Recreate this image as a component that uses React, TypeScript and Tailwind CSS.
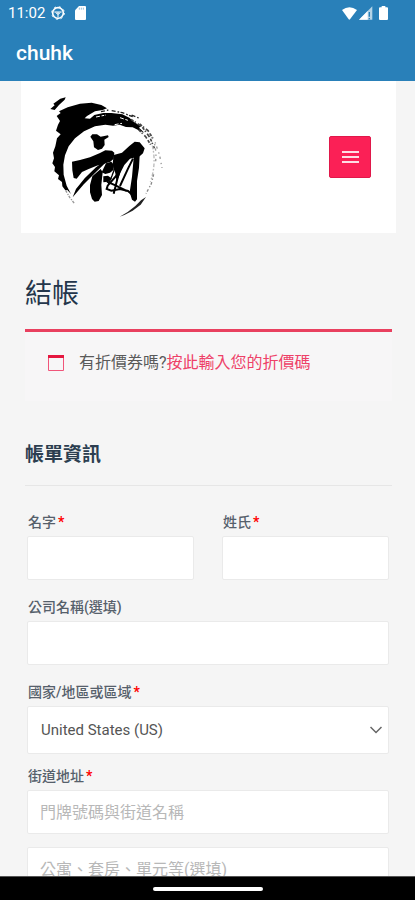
import { useState } from 'react';
import type { InputHTMLAttributes } from 'react';

interface FieldLabelProps {
  htmlFor: string;
  text: string;
  required?: boolean;
}

function FieldLabel({ htmlFor, text, required }: FieldLabelProps) {
  return (
    <label htmlFor={htmlFor} className="block h-7 text-sm leading-7 font-medium text-[#56606b] pl-px">
      {text}
      {required && <span className="ml-0.5 font-bold text-[#ff0000]">*</span>}
    </label>
  );
}

function TextInput(props: InputHTMLAttributes<HTMLInputElement>) {
  return (
    <input
      type="text"
      className="block w-full h-11 px-3 bg-white border border-[#eaeaea] rounded-xs text-base text-[#666666] placeholder:text-[#b8b8b8] focus:outline-none focus:border-[#fb2056]"
      {...props}
    />
  );
}

function StatusBar() {
  return (
    <div className="flex items-center justify-between h-[26px] pl-2 pr-[27px] text-white">
      <div className="flex items-center">
        <span className="text-[15px] leading-[26px]">11:02</span>
        <svg className="w-[14px] h-[14px] ml-1.5" viewBox="0 0 42 42" fill="none" stroke="currentColor">
          <circle cx="21" cy="21" r="16" strokeWidth="5" />
          <circle cx="21" cy="21" r="19" strokeWidth="3" strokeDasharray="6 9" />
          <path d="M10 18h22M21 18v16M14 20l7 5 7-5" strokeWidth="3" />
        </svg>
        <svg className="w-[11px] h-[14px] ml-2.5" viewBox="0 0 33 42" fill="currentColor">
          <path d="M12 0h18a3 3 0 0 1 3 3v36a3 3 0 0 1-3 3H3a3 3 0 0 1-3-3V13z" />
          <path d="M13 5v6M19 5v6M25 5v6" stroke="#2980b9" strokeOpacity="0.6" strokeWidth="2.5" />
        </svg>
      </div>
      <div className="flex items-center">
        <svg className="w-[15px] h-[13px]" viewBox="0 0 45 39" fill="currentColor">
          <path d="M0 9Q22-8 45 9L24 37q-2 2-4 0z" />
        </svg>
        <svg className="w-[14px] h-[14px] ml-0.5" viewBox="0 0 42 42">
          <path d="M0 41 40 1v40z" fill="currentColor" fillOpacity="0.65" />
          <path d="M0 41 26 15v26z" fill="currentColor" />
          <path d="M31 18v14M31 36v4" stroke="#2980b9" strokeWidth="4" />
        </svg>
        <svg className="w-[9px] h-[14px] ml-1.5" viewBox="0 0 27 42" fill="currentColor">
          <path d="M8 0h11v4h5a3 3 0 0 1 3 3v32a3 3 0 0 1-3 3H3a3 3 0 0 1-3-3V7a3 3 0 0 1 3-3h5z" />
        </svg>
      </div>
    </div>
  );
}

// Ink brush ring with the calligraphic mark inside
function Logo() {
  return (
    <svg className="w-[140px] h-[145px]" viewBox="0 0 420 435" role="img" aria-label="chuhk">
      {/* ring, thick upper left part */}
      <path d="M31 72 44 61 40 56 61 41 77 37 74 44 57 60 44 75z" />
      <path d="M50 93 62 84 57 79 83 67 120 56 155 53 184 60 201 70 188 75 165 79 141 93 134 100 150 101 163 90 190 84 214 84 247 88 268 98 283 112 303 124 297 128 313 143 296 136 278 127 258 126 239 119 219 122 196 119 165 124 132 139 105 160 86 184 75 211 70 239 71 269 80 302 93 327 82 315 76 316 67 304 66 291 54 282 57 271 43 259 45 246 37 235 42 220 39 203 46 184 51 160 62 148 48 137 54 119 60 108z" />
      {/* dry brush streaks */}
      <path d="M168 96l30-6M224 119l22-4M240 98l24 8" stroke="#fff" strokeWidth="3" strokeDasharray="12 5 8 4" />
      <path d="M183 80l22-5M215 77l32 6 36 14M275 90l21 9" stroke="#222" strokeWidth="4" strokeDasharray="12 6 5 4" fill="none" />
      <path d="M273 103 306 125 330 158 343 190 M299 117 324 137 340 162 M296 134 317 155 332 179" fill="none" stroke="#444" strokeWidth="5" strokeDasharray="9 4 4 7 12 6" />
      <path d="M328 145 346 174 359 211 366 249 M344 177 348 202 347 231" fill="none" stroke="#999" strokeWidth="4" strokeDasharray="4 9 7 12" />
      <path d="M337 182Q350 237 331 291" fill="none" stroke="#bbb" strokeWidth="4" strokeDasharray="11 5 5 6" />
      <path d="M341 268 334 296 318 326" fill="none" stroke="#888" strokeWidth="4" strokeDasharray="8 5 4 7" />
      <path d="M318 336 302 359 278 377 253 390 239 395 263 381 286 363 303 346z" fill="#222" />
      <path d="M77 316 89 337 103 355" fill="none" stroke="#999" strokeWidth="4" strokeDasharray="8 4 4 3" />
      {/* mark */}
      <path d="M151 155 157 148 171 148 182 155 204 151 206 156 193 164 194 180 186 191 174 195 162 187 160 169z" />
      <path d="M96 230 120 225 150 217 180 204 196 196 216 197 223 203 221 221 211 230 190 237 170 242 146 252 126 261 110 281 101 279 97 256z" />
      <path d="M206 220 198 232 165 264 132 297 98 337 108 312 134 280 168 247z" />
      <path d="M157 274 182 252 188 262 184 300 186 330 176 348 164 350 156 342 150 322 150 300z" />
      <path d="M198 235 214 230 222 240 221 254 210 263 196 267 185 262z" />
      <path d="M190 274 204 272 216 281 205 290 190 292z" />
      <path d="M221 210 246 203 268 183 284 170 299 172 314 190 309 205 299 214 270 221 253 240 242 262 230 290 226 265 218 236z" />
      <path d="M282 208 299 211 297 248 291 288 291 343 285 350 276 344 269 322 276 275z" />
      {/* thin strokes */}
      <path d="M243 244 232 282 221 326M279 221 264 251 240 303M236 264 203 302 200 312 214 317 240 312 264 318 280 332M201 290 228 302 260 318" fill="none" stroke="#000" strokeWidth="6" />
      <path d="M228 240 216 272 205 298" fill="none" stroke="#000" strokeWidth="4" />
    </svg>
  );
}

export default function App() {
  const [country, setCountry] = useState('US');

  return (
    <div className="flex flex-col h-screen overflow-hidden bg-[#f5f5f5] font-[Roboto,'Noto_Sans_CJK_TC',sans-serif]">
      <header className="shrink-0 bg-[#2980b9]">
        <StatusBar />
        <h1 className="h-[55px] pl-4 text-[21px] leading-[55px] font-medium text-white">chuhk</h1>
      </header>

      <main className="flex-1 min-h-0 overflow-hidden pl-[21px] pr-[19px]">
        <div className="flex items-center justify-between h-[152px] pl-[19px] pr-[25px] bg-white">
          <a href="#home">
            <Logo />
          </a>
          <button
            type="button"
            aria-label="選單"
            className="flex items-center justify-center w-[42px] h-[42px] rounded-xs border border-[#e0184a] bg-[#fb2056] text-[#ffdde5]"
          >
            <svg className="w-[17px] h-[14px]" viewBox="0 0 17 14" fill="none" stroke="currentColor" strokeWidth="2">
              <path d="M0 2h17M0 7h17M0 12h17" />
            </svg>
          </button>
        </div>

        <div className="px-1">
          <h2 className="pt-[41px] text-[27px] leading-10 text-[#24364b]">結帳</h2>

          <div className="flex items-center h-[72px] mt-[15px] pb-2 pl-[23px] border-t-3 border-[#e9405f] bg-[#f7f6f7] text-base text-[#5a5a5a]">
            <svg className="w-4 h-4 mr-[15px]" viewBox="0 0 16 16" fill="none" stroke="#f0557a">
              <path d="M.5 1v14.5h15V1" />
              <path d="M0 1.5h16" stroke="#e5173f" strokeWidth="3" />
            </svg>
            <p>
              有折價券嗎?
              <a href="#coupon" className="text-[#ee4168]">按此輸入您的折價碼</a>
            </p>
          </div>

          <form>
            <h3 className="mt-[38px] pb-[14px] border-b border-[#e6e6e6] text-[19px] leading-8 font-bold text-[#2c3e50]">
              帳單資訊
            </h3>

            <div className="pt-[22px] pl-0.5 pr-[3px]">
              <div className="grid grid-cols-2 gap-7">
                <div>
                  <FieldLabel htmlFor="first_name" text="名字" required />
                  <TextInput id="first_name" />
                </div>
                <div>
                  <FieldLabel htmlFor="last_name" text="姓氏" required />
                  <TextInput id="last_name" />
                </div>
              </div>

              <div className="mt-[13px]">
                <FieldLabel htmlFor="company" text="公司名稱(選填)" />
                <TextInput id="company" />
              </div>

              <div className="mt-[13px]">
                <FieldLabel htmlFor="country" text="國家/地區或區域" required />
                <div className="relative">
                  <select
                    id="country"
                    value={country}
                    onChange={(e) => setCountry(e.target.value)}
                    className="block w-full h-12 pl-[13px] pr-8 appearance-none bg-white border border-[#eaeaea] rounded-xs text-[15px] text-[#555555]"
                  >
                    <option value="US">United States (US)</option>
                    <option value="HK">Hong Kong</option>
                  </select>
                  <svg
                    className="absolute right-[7px] top-5 w-3 h-2 pointer-events-none"
                    viewBox="0 0 12 8"
                    fill="none"
                    stroke="#666"
                    strokeWidth="1.5"
                  >
                    <path d="m.5 1 5.5 5.5L11.5 1" />
                  </svg>
                </div>
              </div>

              <div className="mt-2">
                <FieldLabel htmlFor="address_1" text="街道地址" required />
                <TextInput id="address_1" placeholder="門牌號碼與街道名稱" />
              </div>
              <div className="mt-[13px]">
                <TextInput
                  id="address_2"
                  aria-label="公寓、套房、單元等(選填)"
                  placeholder="公寓、套房、單元等(選填)"
                />
              </div>
            </div>
          </form>
        </div>
      </main>

      <div className="flex items-center justify-center shrink-0 h-6 bg-black border-t border-[#555]">
        <div className="w-[110px] h-1 rounded-full bg-white" />
      </div>
    </div>
  );
}
